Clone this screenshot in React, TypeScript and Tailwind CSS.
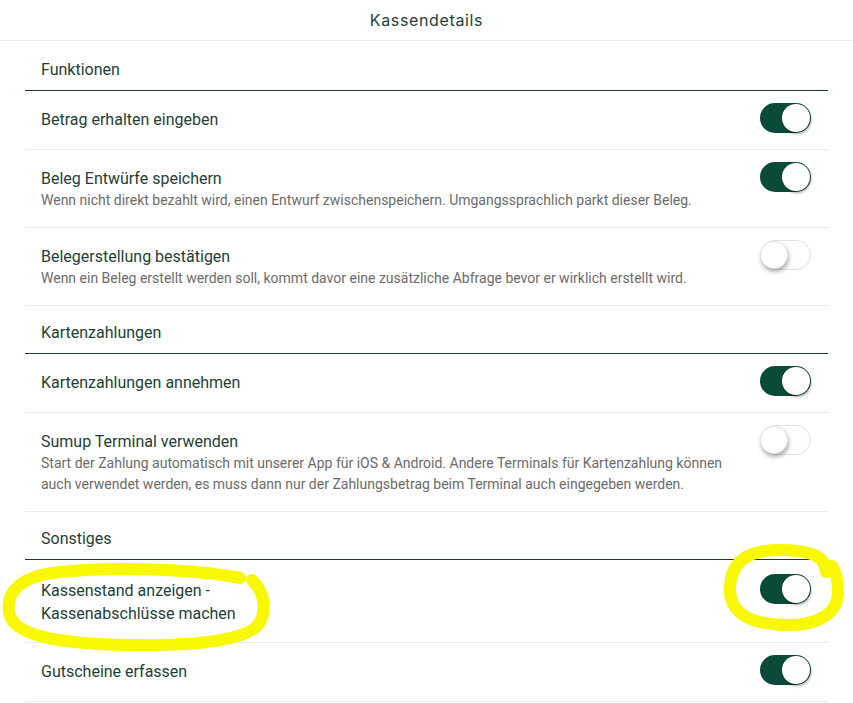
import React from "react";

const FONT = { fontFamily: "Roboto, 'Noto Sans', sans-serif" };

function Toggle({ on }: { on: boolean }) {
  return on ? (
    <div className="flex h-[30px] w-[51px] shrink-0 items-center justify-end rounded-full bg-[#0b4a3b] pr-[1px]">
      <div className="h-[28px] w-[28px] rounded-full bg-white shadow-[1px_2px_3px_rgba(0,0,0,0.35)]" />
    </div>
  ) : (
    <div className="flex h-[30px] w-[51px] shrink-0 items-center justify-start rounded-full border border-[#e2e2e2] bg-white">
      <div className="-ml-[1px] h-[28px] w-[28px] rounded-full border border-[#e6e6e6] bg-white shadow-[1px_3px_4px_rgba(0,0,0,0.3)]" />
    </div>
  );
}

function Section({ title, first }: { title: string; first?: boolean }) {
  return (
    <div
      className={`border-b border-[#1c3a33] pl-[16px] pb-[9px] text-[16px] leading-[22px] text-[#1e4038] ${
        first ? "pt-[18px]" : "pt-[16px]"
      }`}
    >
      {title}
    </div>
  );
}

function Row({
  title,
  desc,
  on,
  tall,
}: {
  title: React.ReactNode;
  desc?: React.ReactNode;
  on: boolean;
  tall?: boolean;
}) {
  return (
    <div
      className={`flex items-start justify-between border-b border-[#ececec] pl-[16px] pr-[17px] ${
        tall ? "pt-[19px] pb-[17px]" : "pt-[17px] pb-[16px]"
      }`}
    >
      <div className="min-w-0 flex-1 pr-[36px]">
        <div className="text-[16px] leading-[23px] text-[#1e4038]">{title}</div>
        {desc && (
          <div className="text-[14px] leading-[21px] text-[#6b6b6b]">{desc}</div>
        )}
      </div>
      <div className="-mt-[5px]">
        <Toggle on={on} />
      </div>
    </div>
  );
}

export default function App() {
  return (
    <div className="relative min-h-[703px] w-full bg-white" style={FONT}>
      <div className="flex h-[41px] items-center justify-center border-b border-[#eeeeee]">
        <span className="text-[16px] tracking-[0.04em] text-[#1e4038]" style={{ fontFamily: "Inter, Roboto, sans-serif" }}>
          Kassendetails
        </span>
      </div>
      <div className="mx-[25px] pb-[4px]">
        <Section title="Funktionen" first />
        <Row title="Betrag erhalten eingeben" on />
        <Row
          title="Beleg Entwürfe speichern"
          desc="Wenn nicht direkt bezahlt wird, einen Entwurf zwischenspeichern. Umgangssprachlich parkt dieser Beleg."
          on
        />
        <Row
          title="Belegerstellung bestätigen"
          desc="Wenn ein Beleg erstellt werden soll, kommt davor eine zusätzliche Abfrage bevor er wirklich erstellt wird."
          on={false}
        />
        <Section title="Kartenzahlungen" />
        <Row title="Kartenzahlungen annehmen" on />
        <Row
          title="Sumup Terminal verwenden"
          desc="Start der Zahlung automatisch mit unserer App für iOS & Android. Andere Terminals für Kartenzahlung können auch verwendet werden, es muss dann nur der Zahlungsbetrag beim Terminal auch eingegeben werden."
          on={false}
        />
        <Section title="Sonstiges" />
        <Row
          tall
          title={
            <>
              Kassenstand anzeigen -
              <br />
              Kassenabschlüsse machen
            </>
          }
          on
        />
        <Row title="Gutscheine erfassen" on />
      </div>
      <svg
        className="pointer-events-none absolute left-0 top-0"
        width="853"
        height="703"
        viewBox="0 0 853 703"
      >
        <path
          d="M240 578 C200 570 120 566 60 572 C20 576 6 592 9 612 C12 636 60 644 130 645 C200 646 250 640 260 622 C268 606 262 590 252 580"
          fill="none"
          stroke="#f8f800"
          strokeWidth="12"
          strokeLinecap="round"
        />
        <path
          d="M826 572 C826 556 810 550 780 550 C750 550 732 560 730 585 C728 610 745 624 785 625 C820 626 838 612 838 592 C838 580 836 572 832 566"
          fill="none"
          stroke="#f8f800"
          strokeWidth="12"
          strokeLinecap="round"
        />
      </svg>
    </div>
  );
}
